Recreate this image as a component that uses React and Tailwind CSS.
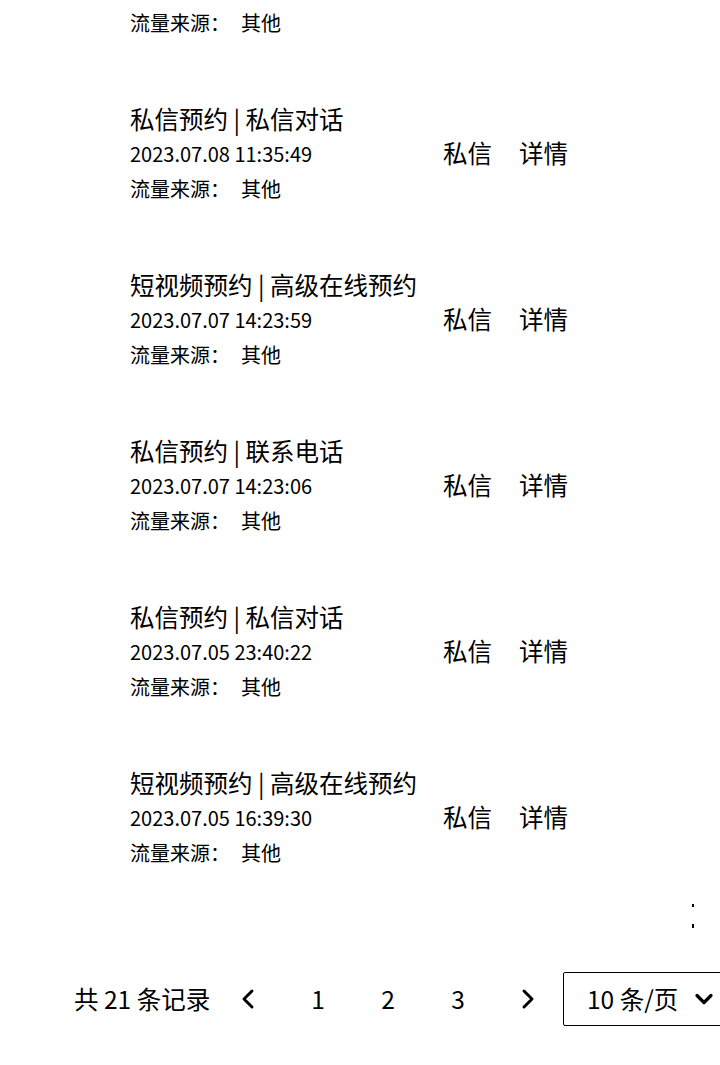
import React from "react";
import { ChevronLeft, ChevronRight, ChevronDown } from "lucide-react";

// 预约记录列表 + 分页（列表已向下滚动，第一条只露出最后一行）

const RECORDS = [
  { title: "私信预约 | 私信对话", time: "2023.07.08 11:35:49", source: "其他" },
  { title: "短视频预约 | 高级在线预约", time: "2023.07.07 14:23:59", source: "其他" },
  { title: "私信预约 | 联系电话", time: "2023.07.07 14:23:06", source: "其他" },
  { title: "私信预约 | 私信对话", time: "2023.07.05 23:40:22", source: "其他" },
  { title: "短视频预约 | 高级在线预约", time: "2023.07.05 16:39:30", source: "其他" },
];

const font = { fontFamily: '"Noto Sans CJK SC", "Noto Sans", sans-serif' };

const Source = ({ value }) => (
  <p className="text-[20px] leading-[35px] whitespace-nowrap">
    流量来源：<span className="ml-[11px]">{value}</span>
  </p>
);

const Record = ({ r }) => (
  <div className="flex pb-[62px]">
    <div className="w-[313px] shrink-0">
      <p className="text-[24.5px] leading-[34px] whitespace-nowrap">{r.title}</p>
      <p className="text-[20px] leading-[35px] whitespace-nowrap">{r.time}</p>
      <Source value={r.source} />
    </div>
    <div className="flex h-[104px] items-center gap-[27px] pb-[2px] text-[24.5px]">
      <button className="leading-none">私信</button>
      <button className="leading-none">详情</button>
    </div>
  </div>
);

export default function App() {
  return (
    <div className="h-[1065px] w-[720px] overflow-hidden bg-white text-black" style={font}>
      <div className="pl-[130px] pt-[5px]">
        <div className="pb-[62px]">
          <Source value="其他" />
        </div>
        {RECORDS.map((r, i) => (
          <Record key={i} r={r} />
        ))}
      </div>

      <div className="flex h-[40px] justify-end pr-[25px]">
        <svg width="4" height="24" viewBox="0 0 4 24" className="-mt-[28px]">
          <path d="M1 0h2v3H1zM1 20h2v4H1z" fill="#000" />
        </svg>
      </div>

      <div className="flex h-[54px] items-center pl-[74px] text-[24.5px]">
        <span className="w-[139px] shrink-0 whitespace-nowrap">共 21 条记录</span>
        <button className="flex w-[70px] shrink-0 justify-center">
          <ChevronLeft size={32} strokeWidth={2.2} />
        </button>
        {[1, 2, 3].map((n) => (
          <button key={n} className="w-[70px] shrink-0 text-center leading-none">
            {n}
          </button>
        ))}
        <button className="flex w-[70px] shrink-0 justify-center">
          <ChevronRight size={32} strokeWidth={2.2} />
        </button>
        <div className="flex h-[54px] w-[170px] shrink-0 items-center rounded-[2px] border border-black pl-[23px]">
          <span className="whitespace-nowrap">10 条/页</span>
          <ChevronDown size={28} strokeWidth={2.8} className="ml-[12px]" />
        </div>
      </div>
    </div>
  );
}
